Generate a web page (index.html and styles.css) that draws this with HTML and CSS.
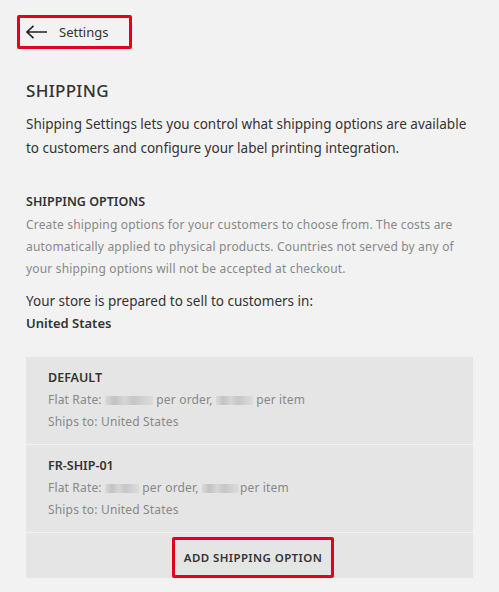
FILE: index.html
```html
<!DOCTYPE html>
<html lang="en">
<head>
  <meta charset="UTF-8">
  <title>Shipping</title>
  <link rel="stylesheet" href="styles.css">
</head>
<body>

  <div class="topbar">
    <a href="#" class="back">
      <svg width="21" height="14" viewBox="0 0 21 14">
        <path d="M1 7 H21 M7.5 0.8 L1 7 L7.5 13.2" fill="none" stroke="#222" stroke-width="1.6"/>
      </svg>
      <span>Settings</span>
    </a>
  </div>

  <div class="main">
    <h1>SHIPPING</h1>
    <p class="intro">Shipping Settings lets you control what shipping options are available to customers and configure your label printing integration.</p>

    <h2>SHIPPING OPTIONS</h2>
    <p class="help">Create shipping options for your customers to choose from. The costs are automatically applied to physical products. Countries not served by any of your shipping options will not be accepted at checkout.</p>

    <p class="prepared">Your store is prepared to sell to customers in:</p>
    <p class="country">United States</p>

    <div class="card">
      <div class="option">
        <h3>DEFAULT</h3>
        <p>Flat Rate: <span class="blur w48"></span> per order, <span class="blur w37"></span> per item</p>
        <p>Ships to: United States</p>
      </div>
      <div class="option">
        <h3>FR-SHIP-01</h3>
        <p>Flat Rate: <span class="blur w34"></span> per order, <span class="blur w37 tight"></span>per item</p>
        <p>Ships to: United States</p>
      </div>
      <div class="add">
        <button>ADD SHIPPING OPTION</button>
      </div>
    </div>
  </div>

</body>
</html>
```

FILE: styles.css
```css
body {
  margin: 0;
  font-family: "Noto Sans", Arial, sans-serif;
  background-color: #f2f2f2;
  color: #333;
}

.topbar {
  padding: 15px 0 0 17px;
}

.back {
  display: inline-flex;
  align-items: center;
  gap: 12px;
  width: 103px;
  height: 28px;
  padding-left: 6px;
  border: 3px solid #e2001a;
  border-radius: 2px;
  color: #333;
  text-decoration: none;
  font-size: 13px;
}

.main {
  padding: 0 26px;
}

h1 {
  margin: 30px 0 0;
  font-size: 17px;
  font-weight: 500;
  letter-spacing: 0.3px;
  line-height: 24px;
}

.intro {
  margin: 9px 0 0;
  font-size: 13.5px;
  line-height: 24px;
}

h2 {
  margin: 31px 0 0;
  font-size: 12.5px;
  font-weight: 600;
  line-height: 22px;
}

.help {
  margin: 1px 0 0;
  font-size: 12px;
  line-height: 22px;
  letter-spacing: 0.17px;
  color: #888;
}

.prepared {
  margin: 10px 0 0;
  font-size: 13.5px;
  line-height: 22px;
}

.country {
  margin: 0;
  font-size: 13px;
  font-weight: 600;
  line-height: 22px;
}

.card {
  margin-top: 23px;
  background-color: #e5e5e5;
}

.option {
  height: 88px;
  padding: 10px 22px 0;
  box-sizing: border-box;
  border-bottom: 1px solid #f2f2f2;
}

h3 {
  margin: 0;
  font-size: 12.5px;
  font-weight: 600;
  line-height: 22px;
}

.option p {
  margin: 0;
  font-size: 12px;
  line-height: 22px;
  letter-spacing: 0.17px;
  color: #888;
}

.blur {
  display: inline-block;
  height: 9px;
  vertical-align: -1px;
  background: linear-gradient(90deg, #dadada, #c2c2c2 20%, #d6d6d6 40%, #c6c6c6 60%, #d2d2d2 80%, #dcdcdc);
}

.w48 { width: 48px; }
.w37 { width: 37px; }
.w34 { width: 34px; }
.tight { margin-right: 1px; }

.add {
  height: 45px;
  display: flex;
  justify-content: center;
  align-items: flex-end;
}

button {
  margin-left: 7px;
  width: 162px;
  height: 41px;
  background: none;
  border: 3px solid #e2001a;
  border-radius: 2px;
  font-family: inherit;
  font-size: 11.5px;
  font-weight: 600;
  letter-spacing: 0.4px;
  color: #333;
  cursor: pointer;
}
```
